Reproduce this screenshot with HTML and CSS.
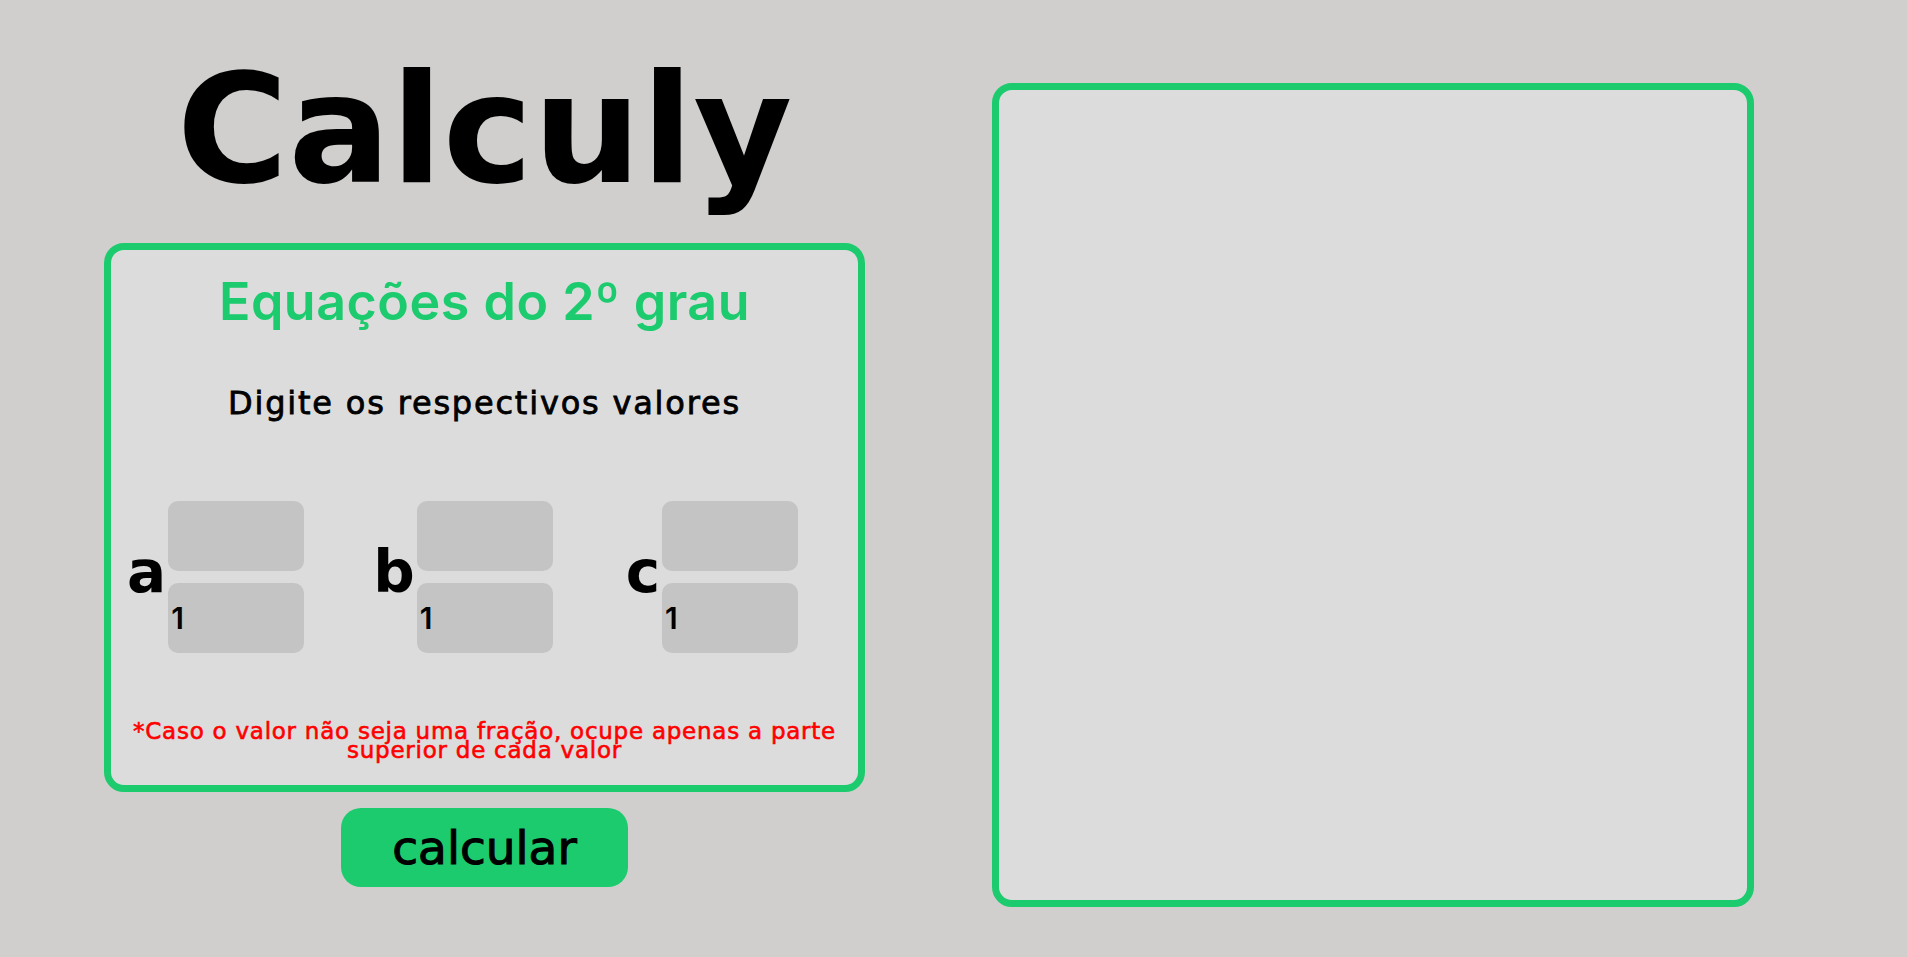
FILE: index.html
```html
<!DOCTYPE html>
<html lang="pt-BR">
<head>
<meta charset="utf-8">
<title>Calculy</title>
<link rel="stylesheet" href="styles.css">
</head>
<body>
<main class="page">
  <section class="left">
    <h1 class="logo">Calculy</h1>
    <div class="card">
      <h2 class="card-title">Equações do 2º grau</h2>
      <p class="card-sub">Digite os respectivos valores</p>
      <div class="coefs">
        <div class="coef">
          <span class="coef-label">a</span>
          <div class="frac">
            <input class="frac-input" type="text" value="">
            <input class="frac-input" type="text" value="1">
          </div>
        </div>
        <div class="coef coef-mid">
          <span class="coef-label">b</span>
          <div class="frac">
            <input class="frac-input" type="text" value="">
            <input class="frac-input" type="text" value="1">
          </div>
        </div>
        <div class="coef">
          <span class="coef-label">c</span>
          <div class="frac">
            <input class="frac-input" type="text" value="">
            <input class="frac-input" type="text" value="1">
          </div>
        </div>
      </div>
      <p class="note">*Caso o valor não seja uma fração, ocupe apenas a parte<br>superior de cada valor</p>
    </div>
    <button class="calc-btn" type="button">calcular</button>
  </section>
  <section class="result"></section>
</main>
</body>
</html>
```
FILE: styles.css
```css
html, body {
  margin: 0;
  padding: 0;
}

body {
  background: #d0cfcd;
  font-family: "DejaVu Sans", sans-serif;
  color: #000;
  min-height: 957px;
}

.page {
  display: flex;
  align-items: flex-start;
  gap: 127px;
  padding-left: 104px;
}

.left {
  width: 761px;
  display: flex;
  flex-direction: column;
  align-items: center;
}

.logo {
  margin: 54px 0 37px;
  font-family: "DejaVu Sans", sans-serif;
  font-weight: 700;
  font-size: 152px;
  line-height: 152px;
}

.card {
  box-sizing: border-box;
  width: 761px;
  height: 549px;
  border: 7px solid #1ccb6e;
  border-radius: 20px;
  background: #dcdcdc;
  padding-top: 22px;
  display: flex;
  flex-direction: column;
  align-items: center;
}

.card-title {
  margin: 0;
  font-family: Inter, sans-serif;
  font-weight: 600;
  font-size: 52px;
  line-height: 60px;
  letter-spacing: 0.5px;
  color: #1ccb6e;
}

.card-sub {
  margin: 51px 0 0;
  font-weight: 400;
  font-size: 32px;
  line-height: 40px;
  letter-spacing: 1.8px;
  -webkit-text-stroke: 0.8px #000;
}

.coefs {
  margin-top: 78px;
  align-self: stretch;
  display: flex;
  gap: 71px;
  padding-left: 16px;
}

.coef-mid {
  margin-left: -2px;
  margin-right: 2px;
}

.coef {
  display: flex;
  align-items: flex-start;
}

.coef-label {
  margin-top: 42px;
  margin-right: 2px;
  font-weight: 700;
  font-size: 58px;
  line-height: 58px;
}

.frac {
  display: flex;
  flex-direction: column;
  gap: 12px;
}

.frac-input {
  box-sizing: border-box;
  width: 136px;
  height: 70px;
  border: none;
  border-radius: 10px;
  background: #c4c4c4;
  padding: 0 3px;
  margin: 0;
  font-family: Inter, sans-serif;
  font-weight: 600;
  font-size: 30px;
  color: #000;
  outline: none;
}

.note {
  margin: 69px 0 0;
  font-size: 23px;
  line-height: 19px;
  letter-spacing: 0.75px;
  color: #ff0000;
  -webkit-text-stroke: 0.6px #ff0000;
  text-align: center;
  white-space: nowrap;
}

.calc-btn {
  margin-top: 16px;
  width: 287px;
  height: 79px;
  border: none;
  border-radius: 20px;
  background: #1ccb6e;
  padding: 0;
  font-family: "DejaVu Sans", sans-serif;
  font-weight: 400;
  font-size: 47px;
  line-height: 79px;
  color: #000;
  -webkit-text-stroke: 1.1px #000;
  cursor: pointer;
}

.result {
  box-sizing: border-box;
  margin-top: 83px;
  width: 762px;
  height: 824px;
  border: 7px solid #1ccb6e;
  border-radius: 20px;
  background: #dcdcdc;
}
```
